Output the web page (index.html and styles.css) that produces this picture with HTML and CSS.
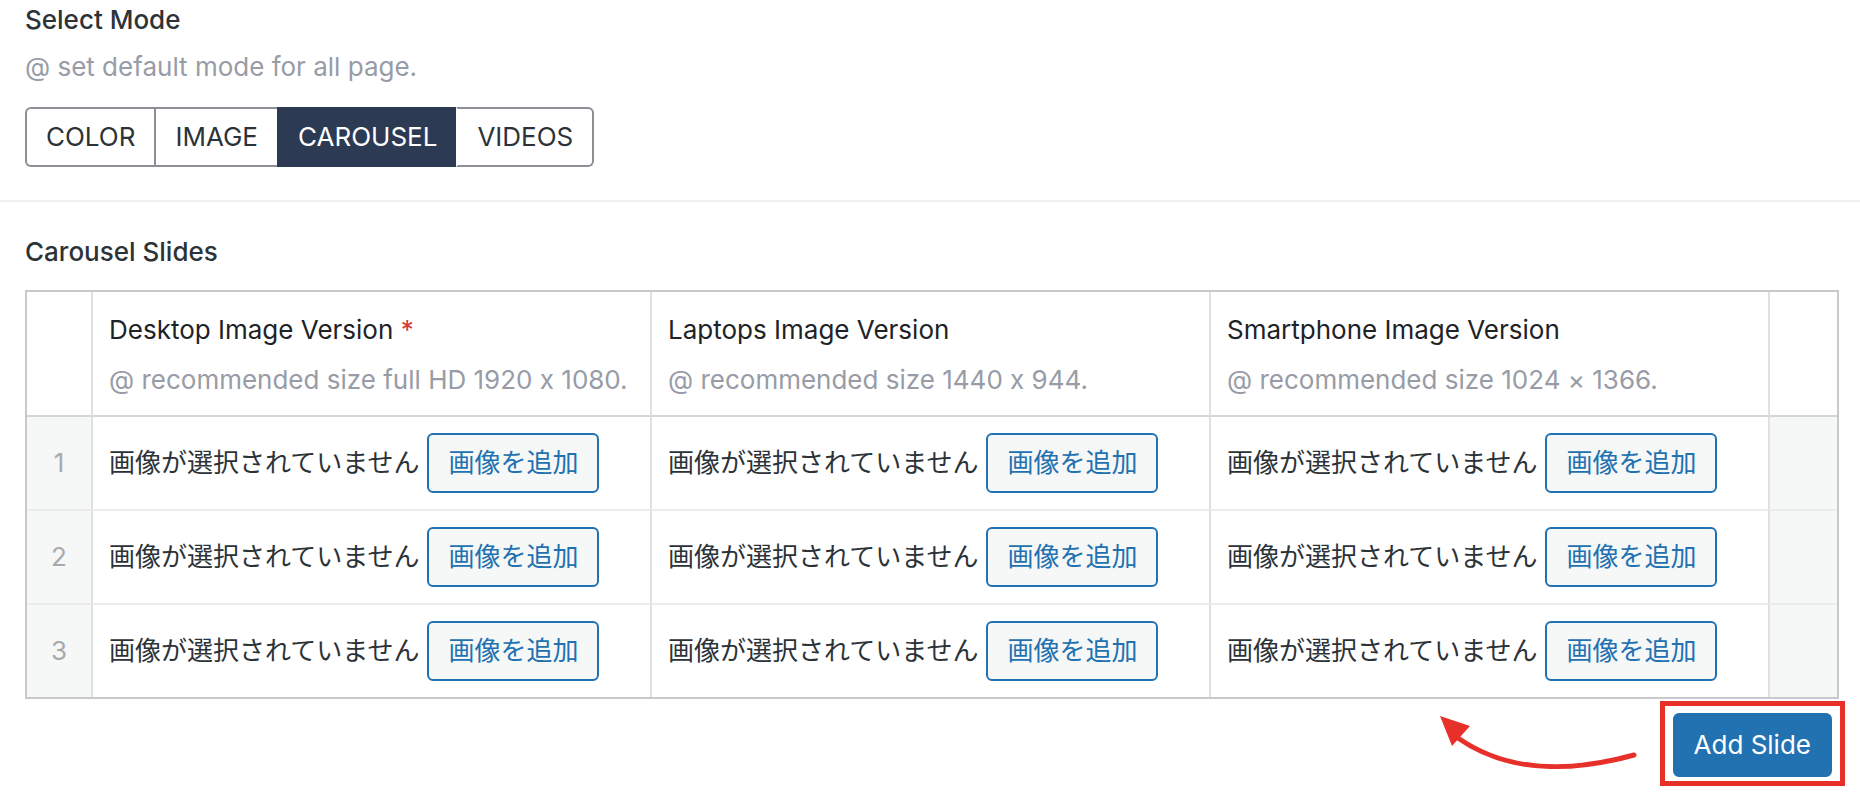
FILE: index.html
```html
<!DOCTYPE html>
<html lang="ja">
<head>
<meta charset="utf-8">
<title>Carousel Settings</title>
<link rel="stylesheet" href="styles.css">
</head>
<body>
<div class="page">
  <section class="mode">
    <h2 class="label">Select Mode</h2>
    <p class="desc">@ set default mode for all page.</p>
    <div class="seg">
      <button class="seg-btn">COLOR</button>
      <button class="seg-btn">IMAGE</button>
      <button class="seg-btn active">CAROUSEL</button>
      <button class="seg-btn">VIDEOS</button>
    </div>
  </section>

  <section class="slides">
    <h2 class="label">Carousel Slides</h2>
    <table class="grid">
      <colgroup>
        <col class="c-num">
        <col class="c-img">
        <col class="c-img">
        <col class="c-img">
        <col class="c-act">
      </colgroup>
      <thead>
        <tr>
          <th class="num"></th>
          <th>
            <div class="th-title">Desktop Image Version <span class="req">*</span></div>
            <div class="th-desc">@ recommended size full HD 1920 x 1080.</div>
          </th>
          <th>
            <div class="th-title">Laptops Image Version</div>
            <div class="th-desc">@ recommended size 1440 x 944.</div>
          </th>
          <th>
            <div class="th-title">Smartphone Image Version</div>
            <div class="th-desc">@ recommended size 1024 × 1366.</div>
          </th>
          <th class="act"></th>
        </tr>
      </thead>
      <tbody>
        <tr>
          <td class="num">1</td>
          <td><div class="cell"><span class="empty">画像が選択されていません</span><button class="btn">画像を追加</button></div></td>
          <td><div class="cell"><span class="empty">画像が選択されていません</span><button class="btn">画像を追加</button></div></td>
          <td><div class="cell"><span class="empty">画像が選択されていません</span><button class="btn">画像を追加</button></div></td>
          <td class="act"></td>
        </tr>
        <tr>
          <td class="num">2</td>
          <td><div class="cell"><span class="empty">画像が選択されていません</span><button class="btn">画像を追加</button></div></td>
          <td><div class="cell"><span class="empty">画像が選択されていません</span><button class="btn">画像を追加</button></div></td>
          <td><div class="cell"><span class="empty">画像が選択されていません</span><button class="btn">画像を追加</button></div></td>
          <td class="act"></td>
        </tr>
        <tr>
          <td class="num">3</td>
          <td><div class="cell"><span class="empty">画像が選択されていません</span><button class="btn">画像を追加</button></div></td>
          <td><div class="cell"><span class="empty">画像が選択されていません</span><button class="btn">画像を追加</button></div></td>
          <td><div class="cell"><span class="empty">画像が選択されていません</span><button class="btn">画像を追加</button></div></td>
          <td class="act"></td>
        </tr>
      </tbody>
    </table>
    <div class="footer">
      <button class="primary">Add Slide</button>
    </div>
  </section>

  <svg class="annot" width="1860" height="806" viewBox="0 0 1860 806" aria-hidden="true">
    <path d="M1634 755 C1580 770 1512 776 1458 738" fill="none" stroke="#e8302a" stroke-width="5" stroke-linecap="round"/>
    <polygon points="1440,716 1470,726 1452,746" fill="#e8302a"/>
  </svg>
</div>
</body>
</html>
```

FILE: styles.css
```css
* { box-sizing: border-box; }

html, body {
  margin: 0;
  padding: 0;
  background: #ffffff;
}

body {
  font-family: "Inter", "Noto Sans CJK JP", sans-serif;
  font-size: 26px;
  line-height: 36px;
  color: #1d2327;
  font-feature-settings: "calt" 0;
}

.page {
  position: relative;
  width: 1860px;
  height: 806px;
  overflow: hidden;
}

.label {
  margin: 0;
  font-size: 26px;
  line-height: 36px;
  font-weight: 500;
  color: #2c3338;
}

.mode {
  padding: 2px 25px 33px;
  border-bottom: 2px solid #f0f0f1;
}

.desc {
  margin: 11px 0 0;
  color: #979ca6;
}

.seg {
  display: inline-flex;
  margin-top: 22px;
}

.seg-btn {
  font-family: inherit;
  font-size: 26px;
  line-height: 56px;
  height: 60px;
  padding: 0 19px;
  margin: 0;
  background: #ffffff;
  color: #2c3338;
  border: 2px solid #8c8f94;
  border-right: none;
  cursor: pointer;
}

.seg-btn:first-child { border-radius: 6px 0 0 6px; }
.seg-btn:last-child { border-right: 2px solid #8c8f94; border-radius: 0 6px 6px 0; }

.seg-btn.active {
  background: #2c3a53;
  border-color: #2c3a53;
  color: #ffffff;
}

.seg-btn.active + .seg-btn { border-left-color: transparent; }

.slides {
  padding: 32px 25px 0;
}

.grid {
  margin-top: 20px;
  width: 1810px;
  table-layout: fixed;
  border-collapse: separate;
  border-spacing: 0;
  border: 2px solid #c8c9cc;
}

.c-num { width: 64px; }
.c-img { width: 559px; }
.c-act { width: 69px; }

.grid th,
.grid td {
  border-left: 2px solid #e0e0e2;
  padding: 0 16px;
  text-align: left;
  font-weight: 400;
}

.grid th:first-child,
.grid td:first-child { border-left: none; }

.grid th {
  padding-top: 20px;
  padding-bottom: 17px;
  border-bottom: 2px solid #d4d5d8;
  vertical-align: top;
}

.th-title {
  color: #1d2327;
}

.req { color: #d63638; }

.th-desc {
  margin-top: 14px;
  color: #979ca6;
  font-feature-settings: "calt" 0;
}

.grid td {
  padding-top: 16px;
  padding-bottom: 16px;
  vertical-align: middle;
}

.grid tbody tr + tr td { border-top: 2px solid #ececed; }

.grid td.num {
  text-align: center;
  color: #a7aaad;
  background: #f6f7f7;
  padding: 0;
}

.grid td.act { background: #f6f7f7; }

.cell {
  display: flex;
  align-items: center;
  gap: 8px;
  height: 60px;
}

.empty {
  white-space: nowrap;
  color: #2c3338;
}

.btn {
  font-family: inherit;
  font-size: 26px;
  line-height: 56px;
  height: 60px;
  padding: 0 19px;
  margin: 0;
  color: #2271b1;
  background: #f6f7f7;
  border: 2px solid #2271b1;
  border-radius: 6px;
  white-space: nowrap;
  cursor: pointer;
}

.footer {
  display: flex;
  justify-content: flex-end;
  padding-right: 3px;
  margin-top: 14px;
}

.primary {
  position: relative;
  font-family: inherit;
  font-size: 26px;
  line-height: 60px;
  height: 64px;
  padding: 0 19px;
  margin: 0;
  color: #ffffff;
  background: #2271b1;
  border: 2px solid #2271b1;
  border-radius: 6px;
  cursor: pointer;
}

.primary::after {
  content: "";
  position: absolute;
  left: -15px;
  right: -15px;
  top: -14px;
  bottom: -11px;
  border: 5px solid #e8302a;
  pointer-events: none;
}

.annot {
  position: absolute;
  left: 0;
  top: 0;
  pointer-events: none;
}
```
